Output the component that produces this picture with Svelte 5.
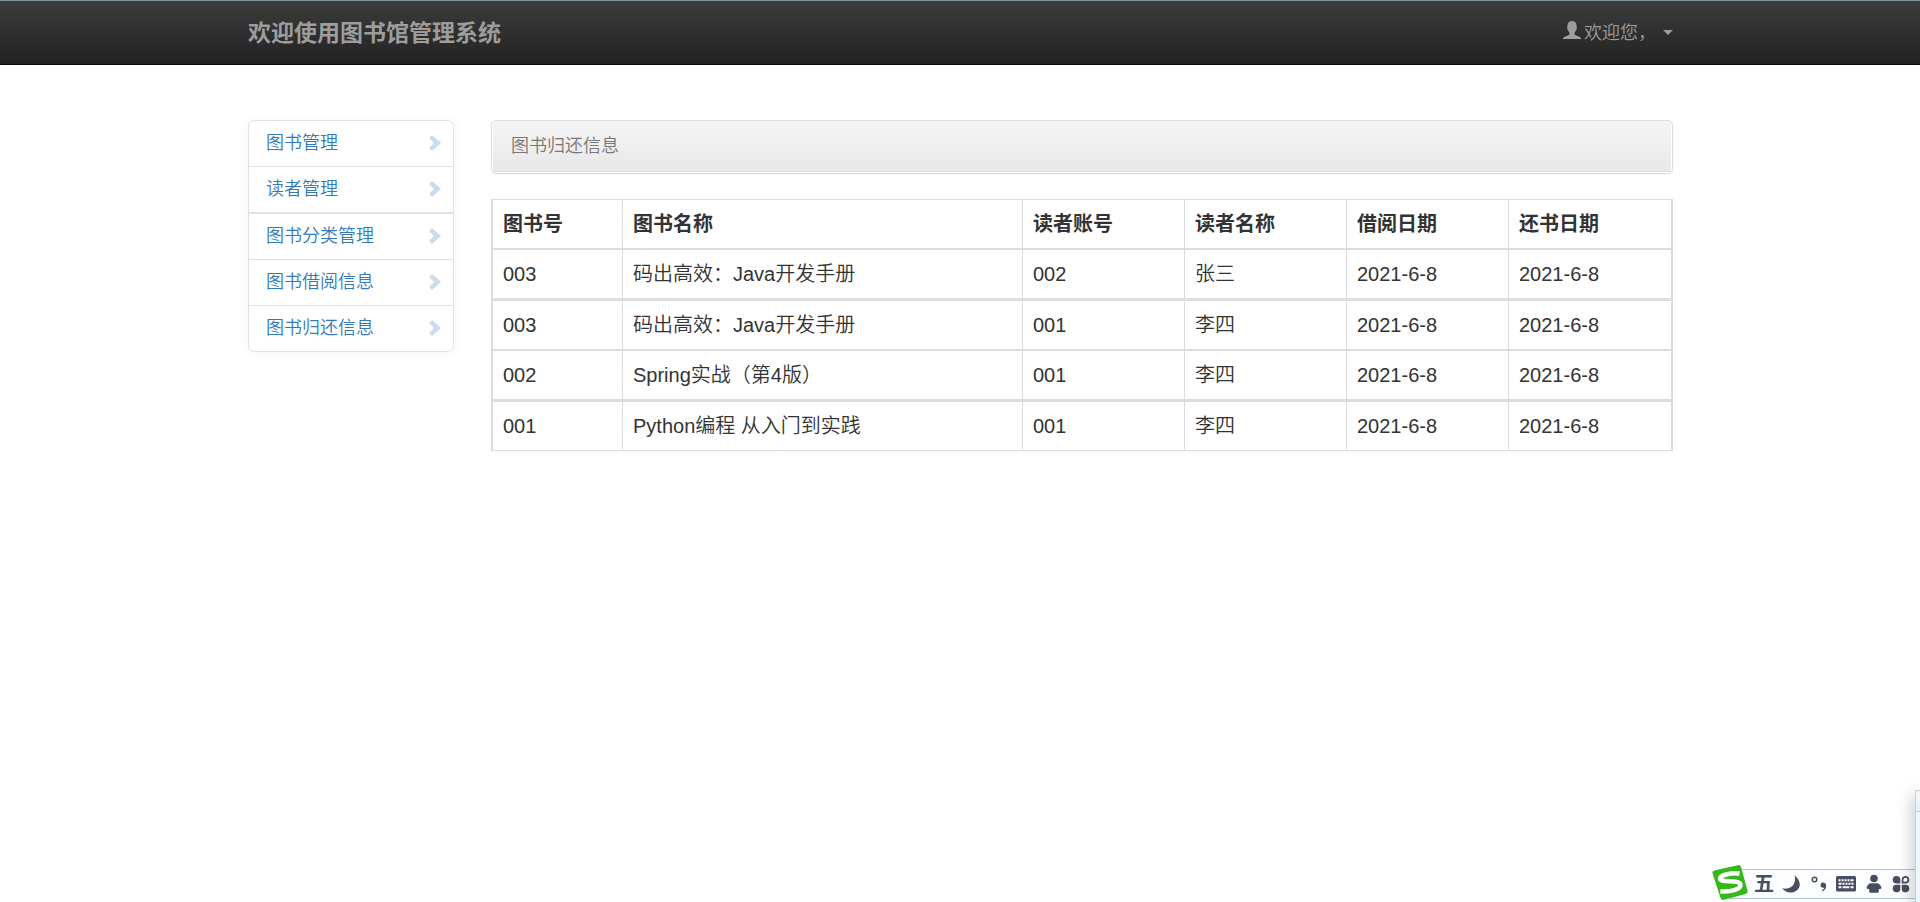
<script lang="ts">
    interface Loan {
        bookId: string;
        title: string;
        readerId: string;
        reader: string;
        borrowed: string;
        returned: string;
    }

    const menu = ['图书管理', '读者管理', '图书分类管理', '图书借阅信息', '图书归还信息']

    const columns = ['图书号', '图书名称', '读者账号', '读者名称', '借阅日期', '还书日期']

    const loans: Loan[] = [
        { bookId: '003', title: '码出高效：Java开发手册', readerId: '002', reader: '张三', borrowed: '2021-6-8', returned: '2021-6-8' },
        { bookId: '003', title: '码出高效：Java开发手册', readerId: '001', reader: '李四', borrowed: '2021-6-8', returned: '2021-6-8' },
        { bookId: '002', title: 'Spring实战（第4版）', readerId: '001', reader: '李四', borrowed: '2021-6-8', returned: '2021-6-8' },
        { bookId: '001', title: 'Python编程 从入门到实践', readerId: '001', reader: '李四', borrowed: '2021-6-8', returned: '2021-6-8' }
    ]
</script>

<svelte:head>
    <title>图书馆管理系统</title>
</svelte:head>

<header class="navbar">
    <div class="container navbar-inner">
        <a class="brand" href="#home">欢迎使用图书馆管理系统</a>
        <button class="user" type="button" aria-haspopup="menu">
            <svg class="user-icon" viewBox="0 0 18 18" aria-hidden="true">
                <path d="M9 0C6.200 0 4.400 1.800 4.400 4.600v2c-.5.3-.4 1.500.3 1.900.3 1.300.9 2.300 1.700 3v1.400c0 .7-.5 1-1.200 1.300L1.300 16C.4 16.400 0 16.900 0 17.600V18h18v-.4c0-.7-.4-1.200-1.300-1.600l-3.900-1.800c-.7-.3-1.200-.6-1.200-1.300v-1.400c.8-.7 1.400-1.700 1.700-3 .7-.4.8-1.600.3-1.900v-2C13.600 1.800 11.800 0 9 0z" />
            </svg>
            <span>欢迎您，</span>
            <span class="caret"></span>
        </button>
    </div>
</header>

<div class="container layout">
    <nav aria-label="菜单">
        <ul class="side-menu">
            {#each menu as item}
                <li>
                    <a href="#{item}">
                        {item}
                        <svg class="chevron" viewBox="0 0 12 16" aria-hidden="true">
                            <path d="M3 0L0 3l5 5-5 5 3 3 9-8z" />
                        </svg>
                    </a>
                </li>
            {/each}
        </ul>
    </nav>

    <main>
        <div class="panel">
            <div class="panel-heading">图书归还信息</div>
        </div>

        <table>
            <colgroup>
                <col class="col-id" />
                <col />
                <col class="col-info" />
                <col class="col-info" />
                <col class="col-info" />
                <col class="col-info" />
            </colgroup>
            <thead>
                <tr>
                    {#each columns as column}
                        <th scope="col">{column}</th>
                    {/each}
                </tr>
            </thead>
            <tbody>
                {#each loans as loan}
                    <tr>
                        <td>{loan.bookId}</td>
                        <td>{loan.title}</td>
                        <td>{loan.readerId}</td>
                        <td>{loan.reader}</td>
                        <td>{loan.borrowed}</td>
                        <td>{loan.returned}</td>
                    </tr>
                {/each}
            </tbody>
        </table>
    </main>
</div>

<!-- input method toolbar -->
<div class="ime" role="toolbar" aria-label="输入法">
    <svg class="ime-logo" viewBox="0 0 36 36" aria-hidden="true">
        <path fill="#35b81a" d="M3.200 5.300L25.800.2c1.700-.4 2.900.4 3.300 2l6.400 23.300c.5 1.700-.2 2.900-1.900 3.400L12 34.800c-1.900.5-3-.2-3.500-2L.6 8.700C.1 6.900 1.100 5.800 3.200 5.300z" />
        <path fill="none" stroke="#fff" stroke-width="4.600" d="M27.500 8.600C20 7.500 8.500 9.500 8.200 13.500c-.2 4.800 19.600.6 20.200 6.200.4 4.700-10.500 7.600-20 6.600" />
    </svg>
    <button type="button" class="ime-mode">五</button>
    <button type="button" aria-label="半角">
        <svg viewBox="0 0 20 20"><path d="M13.500 1.500c6 4.500 7 11 2.500 14.700-4.500 3.700-11.500 2.800-14.800-2 5 1.300 9.300-.3 11.300-3.700 1.700-2.900 2-6 1-9z" /></svg>
    </button>
    <button type="button" aria-label="中文标点">
        <svg viewBox="0 0 20 20">
            <circle cx="5.500" cy="5.500" r="2.300" fill="none" stroke="#484e62" stroke-width="1.500" />
            <path d="M14 8.500c2 0 3.200 1.300 3.200 3.300 0 2.600-1.500 4.800-4.100 5.600v-1.400c1.300-.5 2-1.300 2.100-2.300-2.100.4-3.700-.7-3.700-2.500 0-1.500 1-2.700 2.500-2.700z" />
        </svg>
    </button>
    <button type="button" aria-label="软键盘">
        <svg viewBox="0 0 20 20">
            <rect y="2" width="20" height="15.500" rx="1.500" />
            <path fill="none" stroke="#fff" stroke-width="2" d="M2.500 6.200h2m1 0h2m1 0h2m1 0h2m1 0h3M2.500 9.700h3m1 0h2m1 0h2m1 0h2m1 0h2M2.500 13.300h3m1.200 0h6.600m1.200 0h3" />
        </svg>
    </button>
    <button type="button" aria-label="皮肤">
        <svg viewBox="0 0 20 20">
            <circle cx="10" cy="4.500" r="3.800" />
            <path d="M6 9.200h8c1.800 1 3.300 2.900 3.500 4.900-.3.900-1.300 1.200-2.700.9v2.500c0 .8-.5 1.300-1.300 1.300h-7c-.8 0-1.300-.5-1.300-1.300V15c-1.400.3-2.400 0-2.700-.9.200-2 1.700-3.900 3.500-4.900z" />
        </svg>
    </button>
    <button type="button" aria-label="工具箱">
        <svg viewBox="0 0 20 20">
            <path d="M9.300 9.500H5.600A3.800 3.800 0 1 1 9.300 5.700zM9.300 10.700v3.700a3.800 3.800 0 1 1-3.700-3.700zM10.700 10.700h3.700a3.800 3.800 0 1 1-3.700 3.700z" />
            <path fill="none" stroke="#484e62" stroke-width="1.800" d="M11.600 8.600V5.700a2.900 2.900 0 1 1 2.900 2.900z" />
        </svg>
    </button>
</div>

<div class="side-window"><div class="side-window-bar"></div></div>

<style>
    :global(body) {
        margin: 0;
        background: #fff;
        color: #333;
        font-family: 'Liberation Sans', 'Noto Sans CJK SC', sans-serif;
        font-size: 18px;
        font-weight: 350;
        line-height: 24px;
    }

    a {
        text-decoration: none;
    }

    button {
        display: flex;
        align-items: center;
        padding: 0;
        border: 0;
        background: none;
        font: inherit;
        cursor: pointer;
    }

    .container {
        box-sizing: border-box;
        max-width: 1462px;
        margin: 0 auto;
        padding: 0 18px 0 19px;
    }

    /* Navbar */
    .navbar {
        border-top: 1px solid #7b9a9d;
        border-bottom: 1px solid #080808;
        background: linear-gradient(#3c3c3c, #222);
    }

    .navbar-inner {
        display: flex;
        align-items: center;
        justify-content: space-between;
        height: 63px;
    }

    .brand {
        color: #9d9d9d;
        font-size: 23px;
        font-weight: 700;
    }

    .user {
        gap: 3px;
        color: #9d9d9d;
    }

    .user-icon {
        align-self: flex-start;
        width: 18px;
        height: 18px;
        fill: currentColor;
    }

    .caret {
        margin-left: 4px;
        border-top: 5px solid;
        border-right: 5px solid transparent;
        border-left: 5px solid transparent;
    }

    .layout {
        display: grid;
        grid-template-columns: 206px minmax(0, 1fr);
        align-items: start;
        gap: 37px;
        margin-top: 55px;
    }

    /* Side menu */
    .side-menu {
        margin: 0;
        padding: 0;
        border: 1px solid #e2e2e2;
        border-radius: 7px;
        box-shadow: 0 1px 12px rgba(0, 0, 0, 0.05);
        list-style: none;
    }

    .side-menu li + li {
        border-top: 1px solid #e2e2e2;
    }

    .side-menu li:nth-child(3) {
        border-top-width: 2px;
    }

    .side-menu a {
        display: flex;
        align-items: center;
        justify-content: space-between;
        padding: 10px 12px 11px 17px;
        color: #337ab7;
    }

    .chevron {
        width: 12px;
        height: 16px;
        fill: #337ab7;
        opacity: 0.25;
    }

    /* Panel */
    .panel {
        padding: 0 1px 1px;
        border: 1px solid #ddd;
        border-radius: 5px;
        box-shadow: 0 1px 2px rgba(0, 0, 0, 0.05);
    }

    .panel-heading {
        padding: 13px 18px;
        border-bottom: 1px solid #ddd;
        border-radius: 4px 4px 0 0;
        background: linear-gradient(#f5f5f5, #e8e8e8);
        color: #777;
    }

    /* Table */
    table {
        width: 100%;
        margin-top: 25px;
        border: solid #ddd;
        border-width: 1px 2px 0;
        border-spacing: 0;
        table-layout: fixed;
        font-size: 20px;
        line-height: 28px;
    }

    .col-id {
        width: 130px;
    }

    .col-info {
        width: 162px;
    }

    th,
    td {
        padding: 10px;
        border: solid #ddd;
        border-width: 0 1px 2px 0;
        text-align: left;
    }

    th {
        font-weight: 700;
    }

    th:last-child,
    td:last-child {
        border-right: 0;
    }

    tbody tr:nth-child(odd) td {
        border-bottom-width: 3px;
    }

    tbody tr:last-child td {
        border-bottom-width: 1px;
    }

    /* Input method toolbar */
    .ime {
        position: fixed;
        right: 5px;
        bottom: 3px;
        display: flex;
        align-items: center;
        justify-content: space-between;
        box-sizing: border-box;
        width: 185px;
        height: 30px;
        padding: 0 4px 0 24px;
        border: solid #b3c3d0;
        border-width: 1px 0;
        background: #fcfdff;
    }

    .ime-logo {
        position: absolute;
        top: -5px;
        left: -18px;
        width: 36px;
        height: 36px;
    }

    .ime button {
        justify-content: center;
        width: 20px;
        height: 20px;
    }

    .ime button svg {
        width: 20px;
        height: 20px;
        fill: #484e62;
    }

    .ime .ime-mode {
        color: #484e62;
        font-size: 20px;
        font-weight: 700;
    }

    /* Edge of the neighbouring window */
    .side-window {
        position: fixed;
        right: 0;
        bottom: 0;
        box-sizing: border-box;
        width: 5px;
        height: 112px;
        border-top: 1px solid #c3d0dc;
        border-left: 1px solid #c3d0dc;
        background: #eef6fe;
        box-shadow: 0 6px 16px rgba(0, 0, 0, 0.5);
    }

    .side-window-bar {
        height: 20px;
        border-bottom: 1px solid #c3d0dc;
        background: linear-gradient(#f4f9ff, #e6eef8);
    }
</style>
